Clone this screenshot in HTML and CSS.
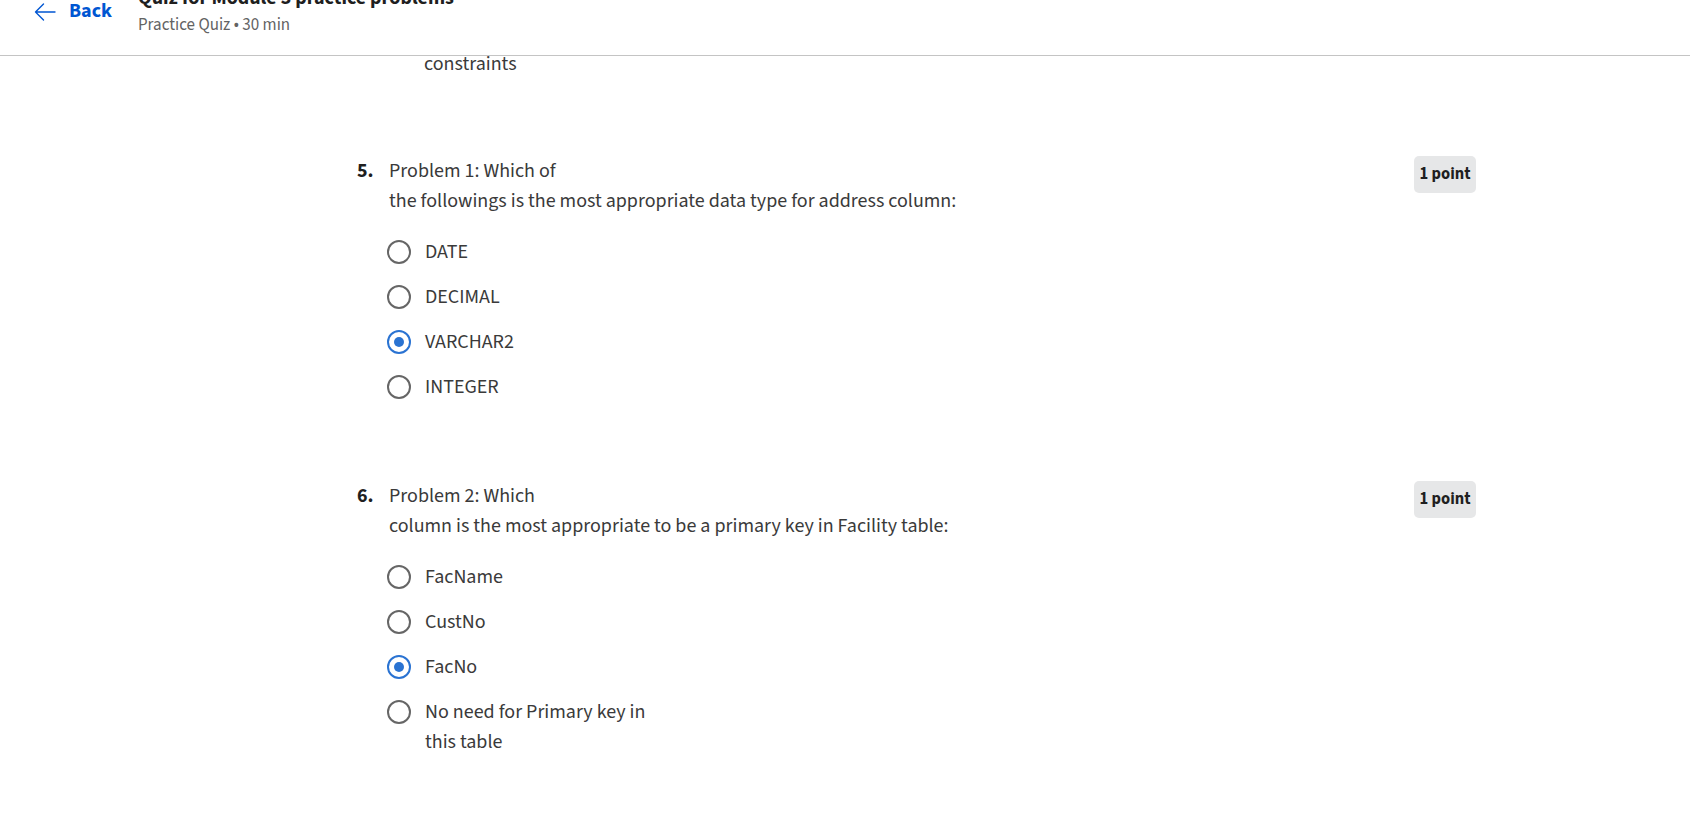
FILE: index.html
```html
<!DOCTYPE html>
<html lang="en">
<head>
<meta charset="utf-8">
<title>Quiz for Module 3 practice problems</title>
<link rel="stylesheet" href="styles.css">
</head>
<body>
<header class="topbar">
  <div class="topbar-inner">
    <a class="back" href="#">
      <svg class="back-arrow" width="22" height="18" viewBox="0 0 22 18" aria-hidden="true">
        <path d="M21 9H1.5M9.5 1L1.5 9l8 8" fill="none" stroke="#0056d2" stroke-width="1.4" stroke-linecap="round" stroke-linejoin="round"/>
      </svg>
      <span class="back-text">Back</span>
    </a>
    <div class="titles">
      <div class="title">Quiz for Module 3 practice problems</div>
      <div class="subtitle">Practice Quiz • 30 min</div>
    </div>
  </div>
</header>

<main class="content">
  <div class="quiz">
    <section class="question tail">
      <div class="tail-line">constraints</div>
    </section>

    <section class="question">
      <div class="q-head">
        <span class="q-num">5.</span>
        <div class="q-body">
          <div class="q-text">Problem 1: Which of</div>
          <div class="q-text">the followings is the most appropriate data type for address column:</div>
          <div class="options">
            <label class="option"><span class="radio"></span><span class="opt-label">DATE</span></label>
            <label class="option"><span class="radio"></span><span class="opt-label">DECIMAL</span></label>
            <label class="option"><span class="radio checked"></span><span class="opt-label">VARCHAR2</span></label>
            <label class="option"><span class="radio"></span><span class="opt-label">INTEGER</span></label>
          </div>
        </div>
        <span class="points">1 point</span>
      </div>
    </section>

    <section class="question">
      <div class="q-head">
        <span class="q-num">6.</span>
        <div class="q-body">
          <div class="q-text">Problem 2: Which</div>
          <div class="q-text">column is the most appropriate to be a primary key in Facility table:</div>
          <div class="options">
            <label class="option"><span class="radio"></span><span class="opt-label">FacName</span></label>
            <label class="option"><span class="radio"></span><span class="opt-label">CustNo</span></label>
            <label class="option"><span class="radio checked"></span><span class="opt-label">FacNo</span></label>
            <label class="option"><span class="radio"></span><span class="opt-label">No need for Primary key in<br>this table</span></label>
          </div>
        </div>
        <span class="points">1 point</span>
      </div>
    </section>
  </div>
</main>
</body>
</html>
```
FILE: styles.css
```css
* { box-sizing: border-box; }

html, body {
  margin: 0;
  padding: 0;
  background: #ffffff;
}

body {
  font-family: "Source Sans Pro", "Source Sans 3", Lato, "Liberation Sans", sans-serif;
  color: #1f1f1f;
  font-size: 20px;
  line-height: 30px;
  overflow: hidden;
  height: 819px;
}

/* ---------- top bar ---------- */
.topbar {
  position: fixed;
  top: 0;
  left: 0;
  right: 0;
  height: 56px;
  background: #ffffff;
  border-bottom: 1px solid #c4c4c4;
  z-index: 10;
  overflow: hidden;
}

.topbar-inner {
  display: flex;
  align-items: flex-start;
  padding-left: 34px;
}

.back {
  display: flex;
  align-items: center;
  gap: 13px;
  margin-top: -1px;
  text-decoration: none;
  color: #0056d2;
}

.back-arrow {
  display: block;
  margin-top: 1px;
}

.back-text {
  font-weight: 700;
  font-size: 20px;
  line-height: 24px;
}

.titles {
  margin-left: 26px;
  margin-top: -14px;
  display: flex;
  flex-direction: column;
}

.title {
  font-weight: 700;
  font-size: 20px;
  line-height: 25px;
  color: #1f1f1f;
}

.subtitle {
  margin-top: 4px;
  font-size: 17px;
  line-height: 20px;
  color: #636363;
}

/* ---------- content ---------- */
.content {
  padding-top: 42px;
}

.quiz {
  margin-left: 357px;
  width: 1119px;
}

.question {
  margin-bottom: 71px;
}

.tail.question {
  margin-bottom: 69px;
}

.tail-line {
  padding: 7px 0 8px 67px;
  color: #3a3a3a;
}

.q-head {
  display: flex;
  align-items: flex-start;
}

.q-num {
  width: 32px;
  flex: none;
  font-weight: 700;
}

.q-body {
  flex: 1;
}

.q-text {
  color: #3a3a3a;
}

.points {
  flex: none;
  background: #e6e7e8;
  border-radius: 5px;
  font-weight: 700;
  font-size: 16.5px;
  line-height: 37px;
  height: 37px;
  padding: 0 5.5px;
  color: #1f1f1f;
}

.options {
  margin-top: 14px;
  margin-left: -2px;
}

.option {
  display: flex;
  align-items: flex-start;
  padding: 7px 0 8px;
  cursor: pointer;
}

.radio {
  flex: none;
  width: 24px;
  height: 24px;
  margin-top: 3px;
  margin-right: 14px;
  border: 2.5px solid #666666;
  border-radius: 50%;
  display: flex;
  align-items: center;
  justify-content: center;
}

.radio.checked {
  border-color: #2a73d2;
}

.radio.checked::after {
  content: "";
  width: 10px;
  height: 10px;
  border-radius: 50%;
  background: #2a73d2;
}

.opt-label {
  color: #3a3a3a;
}
```
